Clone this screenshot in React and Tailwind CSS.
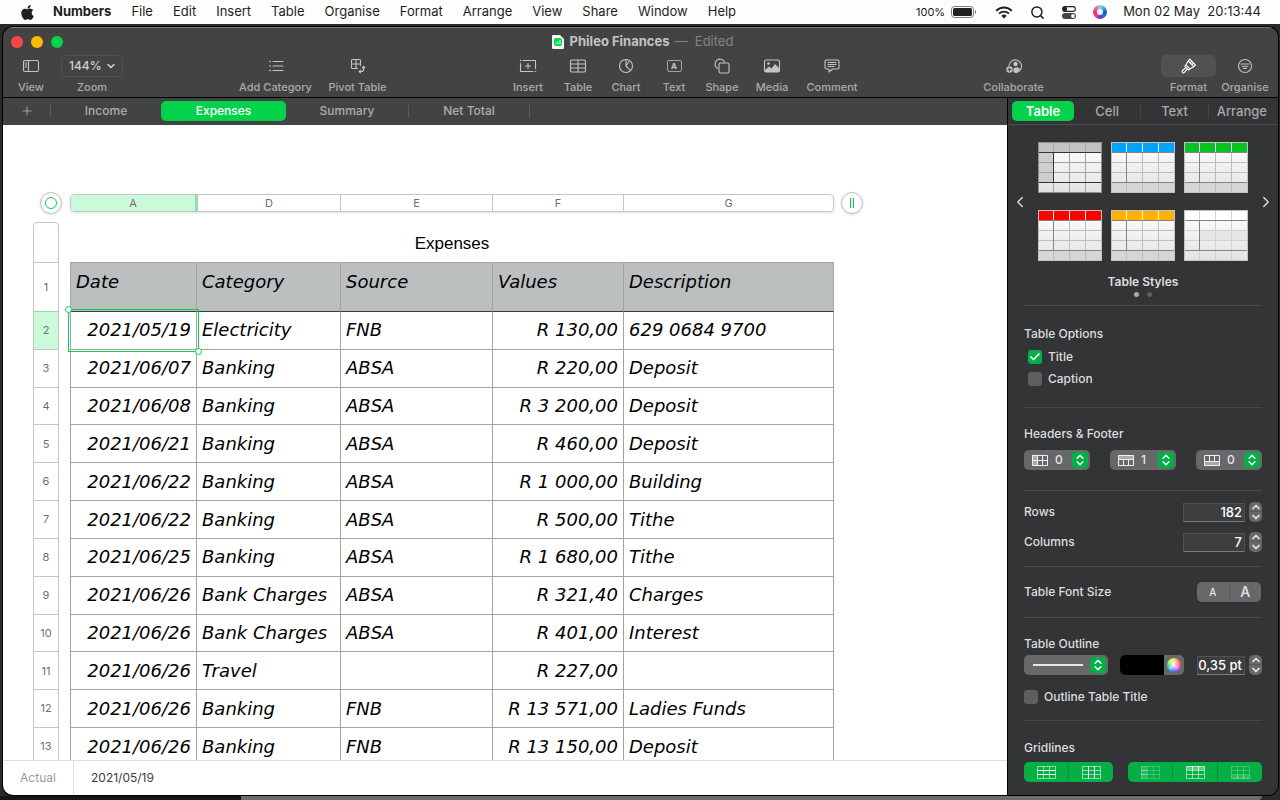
import { useState } from "react"
import { FaApple } from "react-icons/fa"
import { Search, ChevronDown, ChevronUp, ChevronLeft, ChevronRight, ChevronsUpDown, Check, Plus } from "lucide-react"

const menus = ["File", "Edit", "Insert", "Table", "Organise", "Format", "Arrange", "View", "Share", "Window", "Help"]

const rows = [
  ["2021/05/19", "Electricity", "FNB", "R 130,00", "629 0684 9700"],
  ["2021/06/07", "Banking", "ABSA", "R 220,00", "Deposit"],
  ["2021/06/08", "Banking", "ABSA", "R 3 200,00", "Deposit"],
  ["2021/06/21", "Banking", "ABSA", "R 460,00", "Deposit"],
  ["2021/06/22", "Banking", "ABSA", "R 1 000,00", "Building"],
  ["2021/06/22", "Banking", "ABSA", "R 500,00", "Tithe"],
  ["2021/06/25", "Banking", "ABSA", "R 1 680,00", "Tithe"],
  ["2021/06/26", "Bank Charges", "ABSA", "R 321,40", "Charges"],
  ["2021/06/26", "Bank Charges", "ABSA", "R 401,00", "Interest"],
  ["2021/06/26", "Travel", "", "R 227,00", ""],
  ["2021/06/26", "Banking", "FNB", "R 13 571,00", "Ladies Funds"],
  ["2021/06/26", "Banking", "FNB", "R 13 150,00", "Deposit"],
]

const columns = [
  { letter: "A", title: "Date", width: "w-[127px]", tab: "w-[124px] border-r-[3px] border-[#9bd8ad] bg-[#cbfadb]" },
  { letter: "D", title: "Category", width: "w-[144px]", tab: "w-[142px] border-r border-[#c6c6c6]" },
  { letter: "E", title: "Source", width: "w-[152px]", tab: "w-[151px] border-r border-[#c6c6c6]" },
  { letter: "F", title: "Values", width: "w-[131px]", tab: "w-[130px] border-r border-[#c6c6c6]" },
  { letter: "G", title: "Description", width: "w-[210px]", tab: "w-[209px]" },
]

const Icon = ({ children, className = "" }) => (
  <svg width="18" height="18" viewBox="0 0 18 18" fill="none" stroke="currentColor" strokeWidth="1.1" strokeLinecap="round" strokeLinejoin="round" className={className}>
    {children}
  </svg>
)

const icons = {
  view: (
    <Icon>
      <rect x="1.5" y="3.5" width="15" height="11" rx="1.5" />
      <path d="M6.5 3.5v11M3.2 6h1.6M3.2 8h1.6M3.2 10h1.6" />
    </Icon>
  ),
  category: (
    <Icon>
      <path d="M6 4.5h10M6 9h10M6 13.5h10" />
      <path d="M3 4.5h.2M3 9h.2M3 13.5h.2" strokeWidth="1.6" />
    </Icon>
  ),
  pivot: (
    <Icon>
      <path d="M8.5 11.5h-5a1 1 0 0 1-1-1v-7a1 1 0 0 1 1-1h7a1 1 0 0 1 1 1v5M7 2.5v9M2.5 7h9" />
      <path d="M10.5 14.5h2a2 2 0 0 0 2-2V10M11.500 13.200l-1.500 1.400 1.500 1.200M13.300 10.800l1.200-1.400 1.300 1.400" />
    </Icon>
  ),
  insert: (
    <Icon>
      <path d="M4 3.5h12.500v8M14 14.500H1.500v-8M9 6.500v5M6.500 9h5" />
      <path d="M1.500 3.500h.2M16.500 14.500h.1" strokeWidth="1.500" />
    </Icon>
  ),
  table: (
    <Icon>
      <rect x="1.500" y="3" width="15" height="12" rx="1.500" />
      <path d="M1.500 7h15M1.500 11h15M9 3v12" />
    </Icon>
  ),
  chart: (
    <Icon>
      <circle cx="9" cy="9" r="6.500" />
      <path d="M9 2.500V9l4.600 4.600M9 9l3-4.500" />
    </Icon>
  ),
  shape: (
    <Icon>
      <path d="M4.500 11.400A5 5 0 1 1 11.600 5" />
      <rect x="6" y="6" width="10" height="10" rx="1.500" />
    </Icon>
  ),
  media: (
    <Icon>
      <rect x="1.500" y="3" width="15" height="12" rx="1.500" />
      <path d="M2 13l4-3.500 2.500 2 3.500-4.500 4.500 4.500V15H2z" fill="currentColor" stroke="none" />
      <circle cx="5.500" cy="6.500" r="1.300" fill="currentColor" stroke="none" />
    </Icon>
  ),
  comment: (
    <Icon>
      <path d="M3.500 3h11A1.500 1.500 0 0 1 16 4.500v6a1.500 1.500 0 0 1-1.500 1.500H9.500L6 15v-3H3.500A1.500 1.500 0 0 1 2 10.500v-6A1.500 1.500 0 0 1 3.500 3z" />
      <path d="M5 5.500h8M5 7.500h8M5 9.500h6" strokeWidth="1" />
    </Icon>
  ),
  collaborate: (
    <Icon>
      <path d="M4 8.500a6.300 6.300 0 1 1 6 7" />
      <circle cx="10.500" cy="7" r="2.200" fill="currentColor" stroke="none" />
      <path d="M8.500 15.300v-3.500a4 4 0 0 1 6.500 0l-.8 2-2 1.300z" fill="currentColor" stroke="none" />
      <circle cx="4.500" cy="12.500" r="3.200" fill="currentColor" stroke="none" />
      <path d="M4.500 11v3M3 12.500h3" stroke="#424443" />
    </Icon>
  ),
  format: (
    <Icon>
      <path d="M9.800 2.200l5.700 5.900-1.700 1.600-5.600-5.800zM8.200 3.900L6 7.800l4 4 3.800-2.100M6 7.800L4.800 9.200l3.800 3.900 1.400-1.300M6 10.500l-3.500 3a1.300 1.300 0 0 0 1.900 1.900l3-3.500M11.500 4l-1.300 2.300M13.600 6.200l-2 1.500" />
    </Icon>
  ),
  organise: (
    <Icon>
      <circle cx="9" cy="9" r="6.500" />
      <path d="M5 7h8M6 9.200h6M7.500 11.400h3" />
    </Icon>
  ),
}

function ToolButton({ icon, label, width = "", active }) {
  return (
    <button className={`flex flex-col items-center ${width}`}>
      <span className={`flex h-[22px] items-center justify-center rounded-[5px] text-[#c4c4c4] ${active ? "w-[55px] bg-[#505251] text-white" : ""}`}>
        {icon}
      </span>
      <span className="mt-[2px] text-[11px] leading-4 font-medium whitespace-nowrap">{label}</span>
    </button>
  )
}

function MenuBar() {
  return (
    <header className="flex h-6 shrink-0 items-center bg-[#fdfdfd] pr-[19px] pl-[19px] text-[13px] text-[#1e1e1e]">
      <FaApple size={17} className="mr-[17px] shrink-0" />
      <nav className="flex gap-[20px]">
        <button className="font-bold">Numbers</button>
        {menus.map((m) => (
          <button key={m}>{m}</button>
        ))}
      </nav>
      <div className="ml-auto flex items-center">
        <span className="mr-[6px] text-[11px]">100%</span>
        <svg width="26" height="12" viewBox="0 0 26 12" className="mr-[18px]">
          <rect x="0.500" y="0.500" width="22" height="11" rx="3" fill="none" stroke="#777" />
          <rect x="2" y="2" width="19" height="8" rx="1.500" fill="#222" />
          <path d="M24 4v4a2.300 2.300 0 0 0 0-4z" fill="#777" />
        </svg>
        <svg width="18" height="13" viewBox="0 0 18 13" fill="none" stroke="#222" strokeWidth="1.900" className="mr-[17px]">
          <path d="M1.200 4.800a11 11 0 0 1 15.600 0M4 7.700a7 7 0 0 1 10 0" />
          <path d="M9 12.500L6.300 9.800a3.800 3.800 0 0 1 5.400 0z" fill="#222" stroke="none" />
        </svg>
        <Search size={15} strokeWidth={2.4} className="mr-[17px]" />
        <svg width="14" height="13" viewBox="0 0 14 13" className="mr-[17px]">
          <rect x="0.600" y="0.600" width="12.800" height="4.800" rx="2.400" fill="none" stroke="#222" strokeWidth="1.100" />
          <circle cx="3" cy="3" r="2.200" fill="#222" />
          <rect x="0" y="7" width="14" height="6" rx="3" fill="#444" />
          <circle cx="11" cy="10" r="1.900" fill="#fff" />
        </svg>
        <span className="mr-[16px] flex h-3.5 w-3.5 items-center justify-center rounded-full bg-[conic-gradient(#8fd4e8,#1fc0c8,#2a4bbd,#2a6bdd,#7b2fbf,#e83e8c,#f0306a,#e86aa0,#8fd4e8)]">
          <span className="h-1.5 w-1.5 rounded-full bg-[#e8f6ff]"></span>
        </span>
        <time className="whitespace-pre">Mon 02 May  20:13:44</time>
      </div>
    </header>
  )
}

function TitleBar() {
  return (
    <div className="shrink-0 border-t border-[#777978] bg-[#424443] text-[#a9aaaa]">
      <div className="relative flex h-[27px] items-center justify-center">
        <div className="absolute left-[8px] flex gap-2">
          <button aria-label="Close" className="h-3 w-3 rounded-full bg-[#ff4543]"></button>
          <button aria-label="Minimise" className="h-3 w-3 rounded-full bg-[#fdbc02]"></button>
          <button aria-label="Zoom window" className="h-3 w-3 rounded-full bg-[#03d34a]"></button>
        </div>
        <svg width="12" height="14" viewBox="0 0 12 14" className="mr-[6px] ml-1">
          <path d="M0 1a1 1 0 0 1 1-1h7l4 4v9a1 1 0 0 1-1 1H1a1 1 0 0 1-1-1z" fill="#f6f6f6" />
          <rect x="2" y="3" width="8" height="8" rx="2" fill="#03dc55" />
          <path d="M4 9V7.500M6 9V6.500M8 9V5" stroke="#d5ffe2" />
        </svg>
        <h1 className="text-[13px] font-bold text-[#c3c4c4]">Phileo Finances</h1>
        <span className="ml-[5px] text-[13px] text-[#828483]">—&nbsp; Edited</span>
      </div>
      <div className="flex h-[43px] items-start border-b border-black pr-[9px] pl-[15px]">
        <ToolButton icon={icons.view} label="View" width="w-[26px]" />
        <div className="ml-[17px] flex flex-col items-center">
          <label className="flex h-[22px] w-[62px] items-center rounded-[5px] border border-[#505251] pl-[7px] text-[#cfcfcf]">
            <select aria-label="Zoom" className="w-[36px] appearance-none text-[12px] font-medium">
              <option>144%</option>
            </select>
            <ChevronDown size={12} strokeWidth={3} />
          </label>
          <span className="mt-[2px] text-[11px] leading-4 font-medium">Zoom</span>
        </div>
        <div className="grow"></div>
        <div className="flex gap-4">
          <ToolButton icon={icons.category} label="Add Category" width="w-[74px]" />
          <ToolButton icon={icons.pivot} label="Pivot Table" width="w-[58px]" />
        </div>
        <div className="grow"></div>
        <div className="flex">
          <ToolButton icon={icons.insert} label="Insert" width="w-[52px]" />
          <ToolButton icon={icons.table} label="Table" width="w-[48px]" />
          <ToolButton icon={icons.chart} label="Chart" width="w-[48px]" />
          <ToolButton
            icon={
              <span className="flex h-3 w-[15px] items-center justify-center rounded-[2px] border border-[#a4a4a4] text-[8px] font-bold">A</span>
            }
            label="Text"
            width="w-[48px]"
          />
          <ToolButton icon={icons.shape} label="Shape" width="w-[48px]" />
          <ToolButton icon={icons.media} label="Media" width="w-[52px]" />
          <ToolButton icon={icons.comment} label="Comment" width="w-[68px]" />
        </div>
        <div className="grow"></div>
        <ToolButton icon={icons.collaborate} label="Collaborate" width="w-[64px]" />
        <div className="grow"></div>
        <div className="flex gap-[5px]">
          <ToolButton icon={icons.format} label="Format" width="w-[55px]" active />
          <ToolButton icon={icons.organise} label="Organise" width="w-[48px]" />
        </div>
      </div>
    </div>
  )
}

function SheetTabs() {
  return (
    <nav className="flex h-[27px] shrink-0 items-center bg-[#424443] pb-px text-[12px] font-medium text-[#acadad]">
      <button aria-label="Add sheet" className="flex w-[47px] justify-center">
        <Plus size={14} strokeWidth={1.5} />
      </button>
      <button className="h-[14px] w-[111px] border-l border-[#5a5c5b] leading-[14px]">Income</button>
      <button className="h-5 w-[125px] rounded-[5px] bg-[#03d34a] text-white">Expenses</button>
      <button className="h-[14px] w-[122px] leading-[14px]">Summary</button>
      <button className="h-[14px] w-[122px] border-x border-[#5a5c5b] leading-[14px]">Net Total</button>
    </nav>
  )
}

function Sheet() {
  return (
    <div className="min-h-0 flex-1 overflow-hidden bg-white pt-[67px] pl-[30px] text-[#6f6f6f]">
      <div className="flex items-center pl-[7px] font-[Inter,sans-serif] text-[11px]">
        <button aria-label="Select table" className="flex h-[22px] w-[22px] shrink-0 items-center justify-center rounded-full border border-[#bdbdbd] shadow-sm">
          <span className="h-3 w-3 rounded-full border border-[#03d34a]"></span>
        </button>
        <div className="mr-[7px] ml-2 flex h-[18px] shrink-0 overflow-hidden rounded-[4px] border border-[#c6c6c6] shadow-sm">
          {columns.map((c) => (
            <button key={c.letter} className={`box-content leading-4 ${c.tab}`}>
              {c.letter}
            </button>
          ))}
        </div>
        <button aria-label="Add column" className="flex h-[22px] w-[22px] shrink-0 items-center justify-center gap-[2px] rounded-full border border-[#bdbdbd] shadow-sm">
          <span className="h-[10px] w-px bg-[#03d34a]"></span>
          <span className="h-[10px] w-px bg-[#03d34a]"></span>
        </button>
      </div>

      <div className="mt-2 flex">
        <div className="mr-[11px] w-[26px] shrink-0 rounded-t-[4px] border border-[#c6c6c6] text-center font-[Inter,sans-serif] text-[11px]">
          <div className="h-[39px]"></div>
          <div className="flex h-[503px] flex-col">
            <div className="flex h-[49px] shrink-0 items-center justify-center border-t border-[#c6c6c6]">1</div>
            {rows.map((row, i) => (
              <div
                key={i}
                className={`flex flex-1 items-center justify-center border-t ${i < 1 ? "border-[#9bd8ad] bg-[#cbfadb]" : "border-[#c6c6c6]"}`}
              >
                {i + 2}
              </div>
            ))}
          </div>
        </div>

        <div className="shrink-0">
          <h2 className="h-[40px] pt-2 text-center font-['Liberation_Sans',sans-serif] text-[17px] leading-7 text-black">Expenses</h2>
          <table className="h-[504px] w-[764px] table-fixed border-separate border-spacing-0 font-['DejaVu_Sans',sans-serif] text-[18px] leading-5 text-black italic">
            <thead>
              <tr className="h-[50px]">
                {columns.map((c) => (
                  <th
                    key={c.letter}
                    className={`${c.width} border-t border-r border-b border-[#a3a3a3] border-b-[#3c3c3c] bg-[#bbbfc0] px-[5px] pt-[9px] text-left align-top font-normal first:border-l`}
                  >
                    {c.title}
                  </th>
                ))}
              </tr>
            </thead>
            <tbody>
              {rows.map((row, r) => (
                <tr key={r}>
                  {row.map((cell, i) => (
                    <td
                      key={i}
                      className={`relative border-r border-b border-[#a3a3a3] px-[5px] align-middle whitespace-nowrap first:border-l ${i === 0 || i === 3 ? "text-right" : ""}`}
                    >
                      {cell}
                      {r === 0 && i === 0 && (
                        <span className="absolute -inset-[3px] z-10 border border-[#03d34a]">
                          <span className="absolute -top-[4px] -left-[4px] h-[7px] w-[7px] rounded-full border border-[#03d34a] bg-white"></span>
                          <span className="absolute -right-[4px] -bottom-[4px] h-[7px] w-[7px] rounded-full border border-[#03d34a] bg-white"></span>
                        </span>
                      )}
                    </td>
                  ))}
                </tr>
              ))}
            </tbody>
          </table>
        </div>
      </div>
    </div>
  )
}

function StyleThumb({ name, head, plain, grey }) {
  const id = `body-${name}`
  const accent = grey ? "#333" : "#8a827c"
  const line = grey ? "#a2a2a2" : plain ? "#d2d2d2" : "#bdbdbd"
  return (
    <button aria-label={`${name} table style`}>
      <svg width="64" height="51" viewBox="0 0 64 51" fill="none">
        <defs>
          <linearGradient id={id} x1="0" y1="0" x2="0" y2="1">
            <stop offset="0" stopColor="#fff" />
            <stop offset="1" stopColor="#e2e2e2" />
          </linearGradient>
        </defs>
        <rect width="64" height="51" fill={`url(#${id})`} />
        {grey && <rect y="10" width="16" height="31" fill="#cecece" />}
        {plain && <rect x="16" y="20" width="47" height="10" fill="#e3e8e7" />}
        {!grey && !plain && <rect y="41" width="64" height="10" fill="#d5d5d3" />}
        <rect width="64" height="10" fill={head} />
        <path d="M0 20.500h64M0 30.500h64M15.500 41v10M31.500 10v41M47.500 10v41" stroke={line} />
        <path d="M15.500 0v10M31.500 0v10M47.500 0v10" stroke={grey ? "#aaa" : plain ? "#d2d2d2" : "#fff"} />
        <path d="M0 10.500h64M15.500 10v31M0 40.500h64" stroke={accent} />
        <rect x="0.500" y="0.500" width="63" height="50" stroke={grey ? "#8f8f8f" : "#c2c2c2"} />
      </svg>
    </button>
  )
}

function GreenArrows() {
  return (
    <span className="flex h-4 w-4 shrink-0 items-center justify-center rounded-[4px] bg-[#04b045] text-white">
      <ChevronsUpDown size={14} strokeWidth={2.4} />
    </span>
  )
}

function CountSelect({ label, value, children }) {
  return (
    <label className="flex h-5 w-[66px] items-center rounded-[5px] bg-[#67686a] pr-[2px] pl-2">
      <svg width="16" height="11" viewBox="0 0 16 11" fill="none" stroke="#f0f0f0" className="shrink-0">
        {children}
      </svg>
      <select aria-label={label} className="min-w-0 flex-1 appearance-none pl-[7px] text-[12px] leading-5 text-[#e6e6e6]">
        <option>{value}</option>
      </select>
      <GreenArrows />
    </label>
  )
}

function Stepper() {
  return (
    <span className="ml-1 flex h-5 w-[13px] flex-col overflow-hidden rounded-[5px] bg-[#67686a] text-[#e6e6e6]">
      <button aria-label="Increase" className="flex h-[10px] items-center justify-center border-b border-[#56575a]">
        <ChevronUp size={12} strokeWidth={3.5} className="shrink-0" />
      </button>
      <button aria-label="Decrease" className="flex h-[10px] items-center justify-center">
        <ChevronDown size={12} strokeWidth={3.5} className="shrink-0" />
      </button>
    </span>
  )
}

function CheckOption({ label, defaultChecked = false }) {
  const [checked, setChecked] = useState(defaultChecked)
  return (
    <label className="relative flex h-4 items-center gap-[6px]">
      <input
        type="checkbox"
        checked={checked}
        onChange={(e) => setChecked(e.target.checked)}
        className="h-[14px] w-[14px] appearance-none rounded-[3px] bg-[#5d5e5f] checked:bg-[#04b045]"
      />
      {checked && <Check size={12} strokeWidth={3.5} className="pointer-events-none absolute left-px text-white" />}
      <span>{label}</span>
    </label>
  )
}

const field = "h-[19px] border border-[#505153] border-b-[#7a7b7c] bg-[#3d3e40] pr-[2px] text-right text-[13px] font-medium text-white"

function GridIcon({ strong, faint, fill }) {
  return (
    <svg width="19" height="13" viewBox="0 0 19 13" fill="none" stroke="#fff">
      {fill && <path d={fill} fill="#fff" fillOpacity={faint ? 0.15 : 0.35} stroke="none" />}
      <path d="M0.500 0.500h18v12h-18zM0.500 4.500h18M0.500 8.500h18M6.500 0.500v12M12.500 0.500v12" strokeOpacity={faint ? 0.22 : 0.55} />
      <path d={strong} strokeOpacity={faint ? 0.25 : 1} />
    </svg>
  )
}

function Inspector() {
  return (
    <aside className="flex w-[271px] shrink-0 flex-col border-l border-black bg-[#333436] text-[12px] leading-4 font-medium text-[#dededf]">
      <nav className="flex h-[27px] shrink-0 items-center border-b border-[#4b4c4e] pr-[3px] text-[13px] text-[#a8a9aa]">
        <div className="flex w-[66px] pl-1">
          <button className="h-5 w-[62px] rounded-[5px] bg-[#03d34a] font-semibold text-white">Table</button>
        </div>
        <button className="flex-1">Cell</button>
        <button className="h-[14px] flex-1 border-x border-[#434446] leading-[14px]">Text</button>
        <button className="flex-1">Arrange</button>
      </nav>

      <div className="mx-4 flex flex-col items-center border-b border-[#48494b] pt-[17px] pb-2">
        <div className="-mx-[13px] flex items-center justify-between self-stretch">
          <button aria-label="Previous styles">
            <ChevronLeft size={18} strokeWidth={1.8} />
          </button>
          <div className="grid grid-cols-3 gap-x-[9px] gap-y-[17px] [&>button]:h-[51px]">
            <StyleThumb name="Grey" head="#c1c3c2" grey />
            <StyleThumb name="Blue" head="#02a2ff" />
            <StyleThumb name="Green" head="#02c521" />
            <StyleThumb name="Red" head="#fe0000" />
            <StyleThumb name="Orange" head="#ffb200" />
            <StyleThumb name="Plain" head="#ffffff" plain />
          </div>
          <button aria-label="Next styles">
            <ChevronRight size={18} strokeWidth={1.8} />
          </button>
        </div>
        <h3 className="mt-[13px] font-semibold">Table Styles</h3>
        <div className="mt-[2px] flex gap-2">
          <span className="h-[5px] w-[5px] rounded-full bg-[#a9aaab]"></span>
          <span className="h-[5px] w-[5px] rounded-full bg-[#5d5e60]"></span>
        </div>
      </div>

      <div className="mx-4 border-b border-[#48494b] pt-5 pb-5">
        <h3>Table Options</h3>
        <div className="mt-[7px] flex flex-col gap-[6px] pl-1">
          <CheckOption label="Title" defaultChecked />
          <CheckOption label="Caption" />
        </div>
      </div>

      <div className="mx-4 border-b border-[#48494b] pt-[18px] pb-5">
        <h3>Headers &amp; Footer</h3>
        <div className="mt-2 flex justify-between">
          <CountSelect label="Header columns" value="0">
            <rect x="0" y="0" width="5" height="11" fill="#aaa" stroke="none" />
            <path d="M0.500 0.500h15v10h-15zM0.500 5.500h15M5.500 0v11M10.500 0v11" />
          </CountSelect>
          <CountSelect label="Header rows" value="1">
            <rect x="0" y="0" width="16" height="4" fill="#aaa" stroke="none" />
            <path d="M0.500 0.500h15v10h-15zM0.500 4.500h15M5.500 4v7M10.500 4v7" />
          </CountSelect>
          <CountSelect label="Footer rows" value="0">
            <rect x="0" y="7" width="16" height="4" fill="#aaa" stroke="none" />
            <path d="M0.500 0.500h15v10h-15zM0.500 6.500h15M5.500 0v7M10.500 0v7" />
          </CountSelect>
        </div>
      </div>

      <div className="mx-4 flex flex-col gap-[10px] border-b border-[#48494b] pt-[11px] pb-[14px]">
        <div className="flex h-5 items-center">
          <label htmlFor="rows" className="flex-1">Rows</label>
          <input id="rows" defaultValue="182" className={`w-[62px] ${field}`} />
          <Stepper />
        </div>
        <div className="flex h-5 items-center">
          <label htmlFor="cols" className="flex-1">Columns</label>
          <input id="cols" defaultValue="7" className={`w-[62px] ${field}`} />
          <Stepper />
        </div>
      </div>

      <div className="mx-4 flex items-center justify-between border-b border-[#48494b] py-[15px]">
        <h3>Table Font Size</h3>
        <div className="mr-px flex h-5 w-16 items-center rounded-[5px] bg-[#67686a] text-[#e6e6e6]">
          <button aria-label="Smaller" className="h-3 flex-1 text-[10px] leading-3">A</button>
          <button aria-label="Larger" className="h-3 flex-1 border-l border-[#555658] text-[14px] leading-3">A</button>
        </div>
      </div>

      <div className="mx-4 border-b border-[#48494b] pt-[18px] pb-[15px]">
        <h3>Table Outline</h3>
        <div className="mt-[3px] flex h-5 items-center">
          <button aria-label="Outline style" className="flex h-5 w-[84px] items-center justify-between rounded-[5px] bg-[#67686a] pr-[2px] pl-[9px]">
            <span className="h-[2px] w-[50px] bg-[#e6e6e6]"></span>
            <GreenArrows />
          </button>
          <button aria-label="Outline colour" className="ml-3 flex h-5 w-16 overflow-hidden rounded-[5px] bg-[#67686a]">
            <span className="h-5 w-[44px] bg-black"></span>
            <span className="m-auto h-[14px] w-[14px] rounded-full bg-[radial-gradient(circle,#fff_0%,#fff0_65%),conic-gradient(#f9d84a,#ff7a4d,#ff3b7f,#d04bff,#5a5cff,#3fc3ff,#36e27a,#d5f04a,#f9d84a)]"></span>
          </button>
          <input aria-label="Outline width" defaultValue="0,35 pt" className={`ml-auto w-[48px] ${field}`} />
          <Stepper />
        </div>
        <div className="mt-[14px]">
          <CheckOption label="Outline Table Title" />
        </div>
      </div>

      <div className="mx-4 pt-[19px]">
        <h3>Gridlines</h3>
        <div className="mt-[6px] flex justify-between">
          <div className="flex h-5 w-[89px] overflow-hidden rounded-[5px] bg-[#04b045]">
            <button aria-label="Body row gridlines" className="flex flex-1 items-center justify-center">
              <GridIcon strong="M0 4.500h19M0 8.500h19" />
            </button>
            <button aria-label="Body column gridlines" className="flex flex-1 items-center justify-center border-l border-[#058f3a]">
              <GridIcon strong="M6.500 0v13M12.500 0v13" />
            </button>
          </div>
          <div className="flex h-5 w-[134px] overflow-hidden rounded-[5px] bg-[#04b045]">
            <button aria-label="Header column gridlines" className="flex flex-1 items-center justify-center">
              <GridIcon faint fill="M0 0h6v13h-6z" strong="M0 4.500h6M0 8.500h6" />
            </button>
            <button aria-label="Header row gridlines" className="flex flex-1 items-center justify-center border-l border-[#058f3a]">
              <GridIcon fill="M0 0h19v4h-19z" strong="M6.500 0v4M12.500 0v4" />
            </button>
            <button aria-label="Footer gridlines" className="flex flex-1 items-center justify-center border-l border-[#058f3a]">
              <GridIcon faint fill="M0 9h19v4h-19z" strong="M6.500 9v4M12.500 9v4" />
            </button>
          </div>
        </div>
      </div>
    </aside>
  )
}

export default function App() {
  return (
    <div className="flex h-screen flex-col overflow-hidden bg-[#2a2a2b] font-[Inter,sans-serif]">
      <MenuBar />
      <div className="mt-[3px] mr-[2px] ml-[3px] flex min-h-0 flex-1 flex-col overflow-hidden rounded-[10px] ring-1 ring-black">
        <TitleBar />
        <div className="flex min-h-0 flex-1">
          <main className="flex min-w-0 flex-1 flex-col">
            <SheetTabs />
            <Sheet />
            <footer className="flex h-[35px] shrink-0 items-center border-t border-[#dedede] bg-white text-[12px]">
              <span className="flex h-full w-[71px] items-center justify-center border-r border-[#dedede] text-[#9a9a9a]">Actual</span>
              <span className="pl-[17px] text-[#3c3c3c]">2021/05/19</span>
            </footer>
          </main>
          <Inspector />
        </div>
      </div>
      <div className="flex h-[5px] shrink-0 pt-px">
        <div className="w-[241px] bg-[#161616]"></div>
        <div className="mr-[18px] flex-1 rounded-br-[4px] bg-[#6d6d6d]"></div>
      </div>
    </div>
  )
}
